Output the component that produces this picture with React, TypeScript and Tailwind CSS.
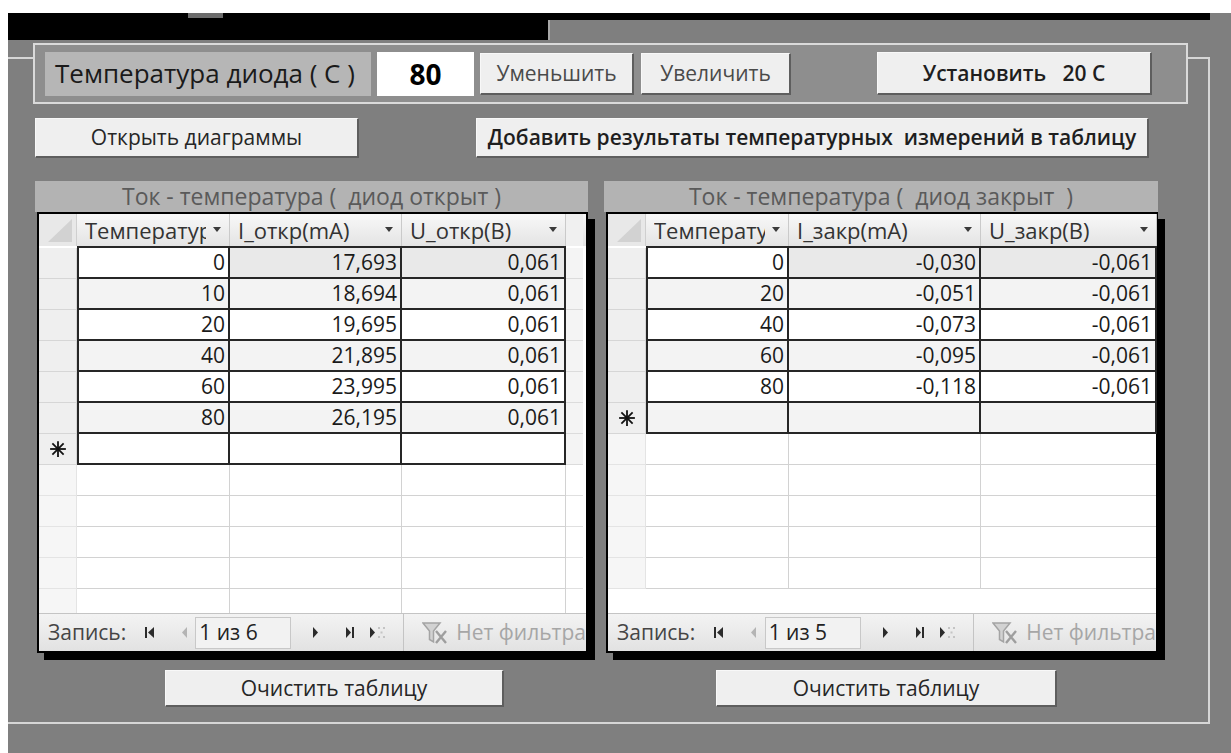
import clsx from "clsx";

type Column = { title: string; w: string };

const FONT = "font-['Open_Sans','DejaVu_Sans',sans-serif]";

const openColumns: Column[] = [
  { title: "Температура", w: "w-[153px]" },
  { title: "I_откр(mA)", w: "w-[172px]" },
  { title: "U_откр(B)", w: "w-[164px]" },
];

const closedColumns: Column[] = [
  { title: "Температура", w: "w-[143px]" },
  { title: "I_закр(mA)", w: "w-[192px]" },
  { title: "U_закр(B)", w: "w-[176px]" },
];

const openRows = [
  ["0", "17,693", "0,061"],
  ["10", "18,694", "0,061"],
  ["20", "19,695", "0,061"],
  ["40", "21,895", "0,061"],
  ["60", "23,995", "0,061"],
  ["80", "26,195", "0,061"],
];

const closedRows = [
  ["0", "-0,030", "-0,061"],
  ["20", "-0,051", "-0,061"],
  ["40", "-0,073", "-0,061"],
  ["60", "-0,095", "-0,061"],
  ["80", "-0,118", "-0,061"],
];

function FormButton({
  className,
  bold,
  muted,
  children,
}: {
  className: string;
  bold?: boolean;
  muted?: boolean;
  children: React.ReactNode;
}) {
  return (
    <button
      className={clsx(
        "flex items-center justify-center whitespace-pre border-t border-l border-r-2 border-b-2 border-t-[#f8f8f8] border-l-[#f8f8f8] border-r-[#5e5e5e] border-b-[#5e5e5e] bg-[#efefef] text-[21px] leading-none",
        bold ? "font-semibold text-[#1e1e1e]" : muted ? "text-[#4a4a4a]" : "text-[#262626]",
        className
      )}
    >
      {children}
    </button>
  );
}

function DropArrow() {
  return (
    <svg width="10" height="6" viewBox="0 0 10 6" className="shrink-0">
      <polygon points="1,0 9,0 5,5" fill="#3a3a3a" />
    </svg>
  );
}

function NewRecordStar() {
  return (
    <svg width="18" height="18" viewBox="0 0 16 16">
      <g stroke="#111" strokeWidth="1.6">
        <line x1="8" y1="1" x2="8" y2="15" />
        <line x1="1" y1="8" x2="15" y2="8" />
        <line x1="3" y1="3" x2="13" y2="13" />
        <line x1="13" y1="3" x2="3" y2="13" />
      </g>
    </svg>
  );
}

function NavBar({ count }: { count: number }) {
  return (
    <div className="flex h-[38px] shrink-0 items-center overflow-hidden whitespace-nowrap border-t border-[#c4c4c4] bg-linear-to-b from-[#f3f3f3] to-[#e2e2e2] text-[21px] text-[#454545]">
      <span className="ml-[9px] w-[100px]">Запись:</span>
      <span className="w-[36px]">
        <svg width="10" height="13" viewBox="0 0 10 13">
          <rect x="0" y="1" width="2" height="11" fill="#2b2b2b" />
          <polygon points="9,1 3,6.5 9,12" fill="#2b2b2b" />
        </svg>
      </span>
      <span className="w-[16px]">
        <svg width="8" height="13" viewBox="0 0 8 13">
          <polygon points="7,1 2,6.5 7,12" fill="#b4b4b4" />
        </svg>
      </span>
      <span className="flex h-[32px] w-[99px] items-center border border-[#c8c8c8] bg-[#f2f2f2] pl-[3px] text-[21px] text-[#222]">
        1 из {count}
      </span>
      <span className="ml-[21px] w-[34px]">
        <svg width="8" height="13" viewBox="0 0 8 13">
          <polygon points="1,1 6,6.5 1,12" fill="#2b2b2b" />
        </svg>
      </span>
      <span className="w-[25px]">
        <svg width="10" height="13" viewBox="0 0 10 13">
          <polygon points="1,1 6,6.5 1,12" fill="#2b2b2b" />
          <rect x="7" y="1" width="2" height="11" fill="#2b2b2b" />
        </svg>
      </span>
      <span className="w-[35px]">
        <svg width="18" height="13" viewBox="0 0 18 13">
          <polygon points="1,1 6,6.5 1,12" fill="#2b2b2b" />
          <g fill="#c4c4c4">
            <rect x="9" y="1" width="2" height="2" />
            <rect x="14" y="1" width="2" height="2" />
            <rect x="11.5" y="5.5" width="2" height="2" />
            <rect x="9" y="10" width="2" height="2" />
            <rect x="14" y="10" width="2" height="2" />
          </g>
        </svg>
      </span>
      <span className="h-[38px] w-px bg-[#c4c4c4]" />
      <span className="ml-[18px] w-[35px]">
        <svg width="26" height="24" viewBox="0 0 26 24">
          <path d="M1 2 H18 L11.5 10 V21 L7.5 18.5 V10 Z" fill="#d2d2d2" stroke="#a4a4a4" strokeWidth="1.5" />
          <path d="M14 10 L24 22 M24 10 L14 22" stroke="#9e9e9e" strokeWidth="2.4" />
        </svg>
      </span>
      <span className="text-[21px] text-[#a6a6a6]">Нет фильтра</span>
    </div>
  );
}

function Datasheet({
  caption,
  columns,
  rows,
  filler,
  className,
}: {
  caption: string;
  columns: Column[];
  rows: string[][];
  filler?: string;
  className: string;
}) {
  const blank = [0, 1, 2, 3, 4];
  return (
    <div className={className}>
      <div className="flex h-[31px] items-center justify-center whitespace-pre bg-[#b3b3b3] text-[23px] text-[#5a5a5a]">
        {caption}
      </div>
      <div className="ml-[2px] flex h-[441px] flex-col border-2 border-black bg-white shadow-[7px_7px_0_#000]">
        {/* header */}
        <div className="flex h-[32px] shrink-0 bg-linear-to-b from-[#f8f8f8] to-[#e4e4e4] text-[22px] text-[#333]">
          <div className="flex w-[38px] shrink-0 items-end justify-end border-r border-[#cfcfcf] bg-[#e8e8e8] p-[3px]">
            <svg width="26" height="24" viewBox="0 0 26 24">
              <polygon points="25,0 25,23 1,23" fill="#d2d2d2" />
            </svg>
          </div>
          {columns.map((c) => (
            <div
              key={c.title}
              className={clsx(c.w, "flex shrink-0 items-center gap-[6px] border-r border-[#cacaca] pl-[8px] pr-[7px]")}
            >
              <span className="flex-1 overflow-hidden whitespace-nowrap">{c.title}</span>
              <DropArrow />
            </div>
          ))}
          {filler && <div className={clsx(filler, "bg-[#f0f0f0]")} />}
        </div>
        {/* records */}
        <div className="flex shrink-0">
          <div className="flex w-[38px] shrink-0 flex-col pt-[2px]">
            {[...rows, ["*"]].map((r, i) => (
              <div
                key={i}
                className="flex h-[31px] items-center justify-center border-b border-r border-[#d6d6d6] bg-[#efefef]"
              >
                {r[0] === "*" && <NewRecordStar />}
              </div>
            ))}
          </div>
          <div className="flex flex-col border-t-2 border-[#262626]">
            {[...rows, ["", "", ""]].map((r, i) => (
              <div key={i} className="flex h-[31px]">
                {columns.map((c, j) => (
                  <div
                    key={c.title}
                    className={clsx(
                      c.w,
                      j === 0 && "border-l-2",
                      "flex shrink-0 items-center justify-end border-b-2 border-r-2 border-[#262626] pr-[3px] text-[21px] text-[#1a1a1a]",
                      i === 0 && j > 0
                        ? "bg-[#e9e9e9]"
                        : i % 2 === 1
                          ? "bg-[#f3f3f3]"
                          : "bg-white"
                    )}
                  >
                    {r[j]}
                  </div>
                ))}
              </div>
            ))}
          </div>
          {filler && (
            <div className="flex flex-col pt-[2px]">
              {[...rows, ["*"]].map((_, i) => (
                <div key={i} className={clsx(filler, "h-[31px] border-b border-[#dcdcdc] bg-[#f4f4f4]")} />
              ))}
            </div>
          )}
        </div>
        {/* empty grid below the records */}
        <div className="flex-1 overflow-hidden">
          {blank.map((i) => (
            <div key={i} className="flex h-[31px]">
              <div className="w-[38px] shrink-0 border-b border-r border-[#e4e4e4] bg-[#f6f6f6]" />
              {columns.map((c) => (
                <div key={c.title} className={clsx(c.w, "shrink-0 border-b border-r border-[#d2d2d2]")} />
              ))}
              {filler && <div className={clsx(filler, "border-b border-[#e0e0e0]")} />}
            </div>
          ))}
        </div>
        <NavBar count={rows.length} />
      </div>
    </div>
  );
}

export default function App() {
  return (
    <div className={clsx("h-[753px] w-[1231px] overflow-hidden bg-white pl-[8px] pt-[13px]", FONT)}>
      <div className="h-[740px] w-[1223px] bg-[#7f7f7f]">
        {/* window title strip */}
        <div className="flex h-[27px]">
          <div className="w-[540px] bg-black pl-[180px]">
            <div className="h-[5px] w-[35px] bg-[#6c6c6c]" />
          </div>
          <div className="w-[662px]">
            <div className="h-[7px] bg-black" />
            <div className="h-[20px] w-[2px] bg-[#a8a8a8]" />
          </div>
        </div>

        {/* form frame */}
        <div className="mt-[17px] h-[667px] w-[1202px] border-y-2 border-r-2 border-[#d6d6d6]">
          {/* temperature group */}
          <div className="-mt-[16px] ml-[25px] flex h-[61px] w-[1155px] items-center border-2 border-[#dadada] bg-[#8e8e8e] pl-[10px]">
            <div className="flex h-[44px] w-[326px] items-center whitespace-pre bg-[#b6b6b6] pl-[10px] text-[26px] text-[#1a1a1a]">
              Температура диода ( С )
            </div>
            <div className="ml-[6px] flex h-[44px] w-[97px] items-center justify-center bg-white text-[28px] font-bold text-black">
              80
            </div>
            <FormButton muted className="ml-[6px] h-[42px] w-[154px]">
              Уменьшить
            </FormButton>
            <FormButton muted className="ml-[7px] h-[42px] w-[150px]">
              Увеличить
            </FormButton>
            <FormButton bold className="ml-[86px] h-[43px] w-[275px]">
              {"Установить   20 С"}
            </FormButton>
          </div>

          <div className="mt-[14px] flex">
            <FormButton className="ml-[27px] h-[40px] w-[324px]">Открыть диаграммы</FormButton>
            <FormButton bold className="ml-[117px] h-[40px] w-[673px]">
              {"Добавить результаты температурных  измерений в таблицу"}
            </FormButton>
          </div>

          <div className="mt-[23px] flex items-start">
            <Datasheet
              className="ml-[27px] w-[553px]"
              caption="Ток - температура (  диод открыт )"
              columns={openColumns}
              rows={openRows}
              filler="w-[17px]"
            />
            <Datasheet
              className="ml-[16px] w-[554px]"
              caption="Ток - температура (  диод закрыт  )"
              columns={closedColumns}
              rows={closedRows}
            />
          </div>

          <div className="mt-[17px] flex">
            <FormButton className="ml-[157px] h-[37px] w-[339px]">Очистить таблицу</FormButton>
            <FormButton className="ml-[212px] h-[37px] w-[341px]">Очистить таблицу</FormButton>
          </div>
        </div>
      </div>
    </div>
  );
}
